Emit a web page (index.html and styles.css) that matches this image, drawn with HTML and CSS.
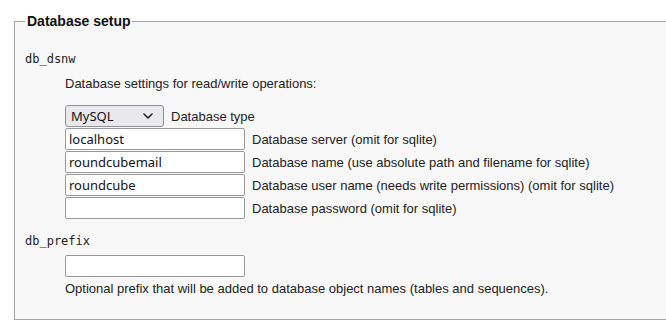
FILE: index.html
```
<!DOCTYPE html>
<html lang="en">
<head>
    <meta charset="UTF-8">
    <title>Roundcube Webmail Installer</title>
    <link rel="stylesheet" href="styles.css">
</head>
<body>
    <fieldset class="setup">
        <legend>Database setup</legend>
        <dl class="configblock">
            <dt class="propname">db_dsnw</dt>
            <dd class="dsn">
                <p>Database settings for read/write operations:</p>
                <div class="dbrows">
                    <div class="dbrow">
                        <span class="selectwrap">
                            <select name="_dbtype" class="dbtype">
                                <option>MySQL</option>
                                <option>PostgreSQL</option>
                                <option>SQLite</option>
                            </select>
                            <svg class="chevron" width="10" height="6" viewBox="0 0 10 6">
                                <path d="M1 1 L5 5 L9 1" fill="none" stroke="#222" stroke-width="1.6" stroke-linecap="round" stroke-linejoin="round"/>
                            </svg>
                        </span>
                        <label>Database type</label>
                    </div>
                    <div class="dbrow">
                        <input type="text" value="localhost">
                        <label>Database server (omit for sqlite)</label>
                    </div>
                    <div class="dbrow">
                        <input type="text" value="roundcubemail">
                        <label>Database name (use absolute path and filename for sqlite)</label>
                    </div>
                    <div class="dbrow">
                        <input type="text" value="roundcube">
                        <label>Database user name (needs write permissions) (omit for sqlite)</label>
                    </div>
                    <div class="dbrow">
                        <input type="password" value="">
                        <label>Database password (omit for sqlite)</label>
                    </div>
                </div>
            </dd>

            <dt class="propname">db_prefix</dt>
            <dd>
                <input type="text" class="prefix" value="">
                <div class="hint">Optional prefix that will be added to database object names (tables and sequences).</div>
            </dd>
        </dl>
    </fieldset>
</body>
</html>
```

FILE: styles.css
```
body {
    font-family: "Liberation Sans", Arial, sans-serif;
    font-size: 13px;
    color: #222;
    margin: 0;
    padding: 0 0 0 14px;
    background-color: #fff;
    overflow: hidden;
}
fieldset.setup {
    margin: 13px 0 0 0;
    padding: 8px 10px 10px 10px;
    width: 700px;
    border: 1px solid #a3a3a3;
    background-color: #f8f8f8;
}
fieldset.setup legend {
    font-size: 14px;
    font-weight: bold;
    padding: 0 2px;
    color: #111;
}
.configblock {
    margin: 0;
}
.propname {
    font-family: "DejaVu Sans Mono", monospace;
    font-size: 12px;
    margin: 15px 0 0 0;
}
.configblock dd {
    margin: 0 0 0 40px;
}
.configblock dd.dsn {
    margin-bottom: 6px;
}
.configblock dd p {
    margin: 10px 0 14px 0;
}
.dbrows {
    display: flex;
    flex-direction: column;
    gap: 1px;
}
.dbrow {
    display: flex;
    align-items: center;
    gap: 7px;
}
.dbrow input, dd input.prefix {
    font-family: "Noto Sans", sans-serif;
    font-size: 13px;
    color: #111;
    width: 180px;
    height: 22px;
    box-sizing: border-box;
    border: 1px solid #999;
    border-radius: 2px;
    background: #fff;
    padding: 0 3px;
    margin: 0;
}
.selectwrap {
    position: relative;
    display: inline-block;
}
.dbtype {
    appearance: none;
    font-family: "Noto Sans", sans-serif;
    font-size: 13px;
    color: #111;
    width: 99px;
    height: 22px;
    box-sizing: border-box;
    padding: 0 0 0 5px;
    border: 1px solid #8f8f9d;
    border-radius: 3px;
    background-color: #e9e9ed;
    margin: 0;
    display: block;
}
.chevron {
    position: absolute;
    right: 11px;
    top: 8px;
    pointer-events: none;
}
dd input.prefix {
    margin-top: 7px;
}
.hint {
    margin: 4px 0 13px 0;
}
```
